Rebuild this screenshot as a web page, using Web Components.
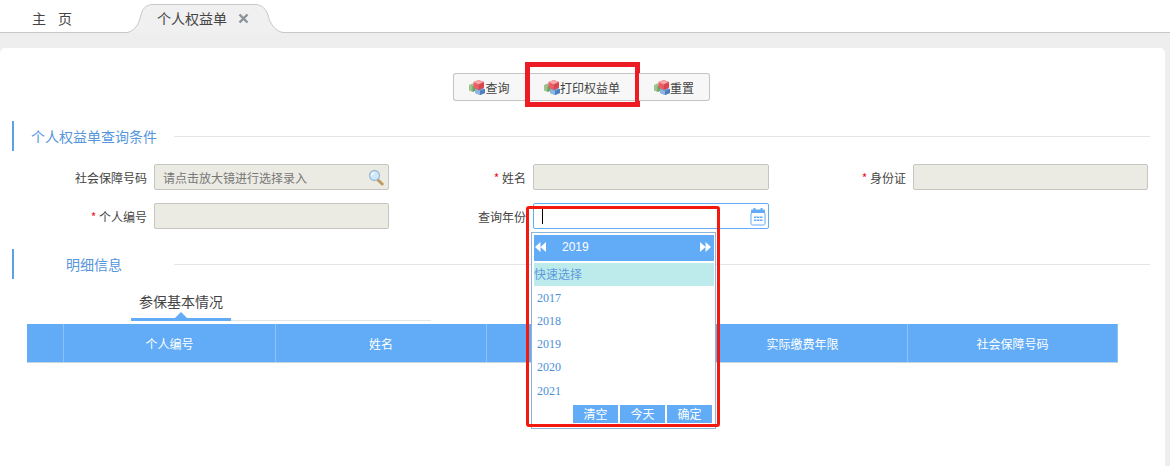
<!DOCTYPE html>
<html lang="zh-CN">
<head>
<meta charset="utf-8">
<title>个人权益单</title>
<style>
    html, body { margin: 0; height: 100%; }
    body {
        background: #eeeeee;
        font-family: "Noto Sans CJK SC", "Liberation Sans", sans-serif;
        font-size: 12px;
        color: #444;
        overflow: hidden;
    }
    #form-grid {
        display: grid;
        grid-template-columns: 389px 380px 379px;
        grid-auto-rows: 26px;
        row-gap: 13px;
        margin-top: 13px;
    }
    #toolbar {
        display: flex;
        margin: 25px 0 20px 453px;
        height: 28px;
    }
</style>
</head>
<body>
<tab-bar></tab-bar>
<content-panel>
    <div id="toolbar">
        <action-button style="width:72px">查询</action-button>
        <action-button style="width:114px" highlight>打印权益单</action-button>
        <action-button style="width:71px">重置</action-button>
    </div>
    <section-title indent="17">个人权益单查询条件</section-title>
    <div id="form-grid">
        <form-field label="社会保障号码"><text-box placeholder="请点击放大镜进行选择录入" search></text-box></form-field>
        <form-field label="姓名" required><text-box style="width:236px"></text-box></form-field>
        <form-field label="身份证" required><text-box></text-box></form-field>
        <form-field label="个人编号" required><text-box></text-box></form-field>
        <form-field label="查询年份"><year-picker></year-picker></form-field>
    </div>
    <section-title indent="52" style="margin-top:20px">明细信息</section-title>
    <detail-tab>参保基本情况</detail-tab>
    <data-table>
        <span></span>
        <span>个人编号</span>
        <span>姓名</span>
        <span></span>
        <span>实际缴费年限</span>
        <span>社会保障号码</span>
    </data-table>
</content-panel>

<script>
const BLUE = '#62acf7';

class TabBar extends HTMLElement {
    constructor() {
        super();
        this.attachShadow({ mode: 'open' });
        this.shadowRoot.innerHTML = `
            <style>
                :host {
                    display: flex;
                    align-items: flex-end;
                    height: 32px;
                    padding-left: 32px;
                    background: #fff;
                    border-bottom: 1px solid #c8c8c8;
                    font-size: 14px;
                    color: #444;
                }
                .home { width: 40px; height: 28px; line-height: 29px; display: flex; justify-content: space-between; }
                .active {
                    position: relative;
                    width: 156px;
                    height: 29px;
                    margin-left: 55px;
                    margin-bottom: -1px;
                    display: flex;
                    align-items: center;
                    box-sizing: border-box;
                    padding: 0 0 1px 30px;
                }
                .shape { position: absolute; left: 0; top: 0; }
                .active span, .close { position: relative; }
                .close { margin-left: 11px; }
            </style>
            <div class="home"><span>主</span><span>页</span></div>
            <div class="active">
                <svg class="shape" width="156" height="29" viewBox="0 0 156 29">
                    <path d="M0 29C8 27 12 20 14 11C15 5 19 1 25 1H129C135 1 139 5 141 11C143 20 148 27 156 29Z" fill="#f0f0f0"/>
                    <path d="M0 28.500C8 27 12 20 14 11C15 5 19 1 25 .5H129C135 1 139 5 141 11C143 20 148 27 156 28.500" fill="none" stroke="#c8c8c8"/>
                </svg>
                <span>个人权益单</span>
                <svg class="close" width="11" height="11" viewBox="0 0 11 11">
                    <path d="M1.500 1.500L9.500 9.500M9.500 1.500L1.500 9.500" stroke="#8a929a" stroke-width="2.400"/>
                </svg>
            </div>
        `;
    }
}

class ContentPanel extends HTMLElement {
    constructor() {
        super();
        this.attachShadow({ mode: 'open' });
        this.shadowRoot.innerHTML = `
            <style>
                :host {
                    display: block;
                    box-sizing: border-box;
                    width: 1165px;
                    height: 418px;
                    margin-top: 15px;
                    background: #fff;
                    border-radius: 5px 5px 0 0;
                    overflow: hidden;
                }
            </style>
            <slot></slot>
        `;
    }
}

class ActionButton extends HTMLElement {
    constructor() {
        super();
        this.attachShadow({ mode: 'open' });
        this.shadowRoot.innerHTML = `
            <style>
                :host {
                    display: flex;
                    position: relative;
                    box-sizing: border-box;
                    align-items: center;
                    justify-content: center;
                    height: 28px;
                    background: #f7f7f7;
                    border: 1px solid #c4c4c4;
                    color: #444;
                    font-size: 12px;
                }
                :host(:first-child) { border-radius: 3px 0 0 3px; border-right: 0; }
                :host(:last-child) { border-radius: 0 3px 3px 0; border-left: 0; }
                :host([highlight])::after {
                    content: "";
                    position: absolute;
                    left: -1px;
                    right: -2px;
                    top: -12px;
                    bottom: -7px;
                    border: 5px solid #ed1c24;
                }
                svg { flex: none; }
            </style>
            <svg width="16" height="16" viewBox="0 0 16 16">
                <path d="M0 6L3.500 4.500L7 6V11.500L3.500 13L0 11.500Z" fill="#9cc48c"/>
                <path d="M3.500 7.500L7 6V11.500L3.500 13Z" fill="#6f9f62"/>
                <path d="M6 10L11 8L16 10V14L11 16L6 14Z" fill="#6f9fd8"/>
                <path d="M6 10L11 12V16L6 14Z" fill="#8db6e4"/>
                <path d="M11 12L16 10V14L11 16Z" fill="#4d80bd"/>
                <path d="M4.500 3L9.700 1L15 3V8.500L9.700 11L4.500 8.500Z" fill="#ea5f66"/>
                <path d="M4.500 3L9.700 1L15 3L9.700 5.400Z" fill="#f6a6a8"/>
                <path d="M9.700 5.400L15 3V8.500L9.700 11Z" fill="#d8474e"/>
            </svg>
            <slot></slot>
        `;
    }
}

class SectionTitle extends HTMLElement {
    constructor() {
        super();
        this.attachShadow({ mode: 'open' });
        const indent = this.getAttribute('indent') || 17;
        this.shadowRoot.innerHTML = `
            <style>
                :host {
                    display: flex;
                    align-items: center;
                    box-sizing: border-box;
                    width: 1138px;
                    height: 30px;
                    margin-left: 12px;
                    border-left: 2px solid #5ba3e6;
                    font-size: 14px;
                    color: #5596dc;
                }
                .title { flex: none; box-sizing: border-box; width: 160px; padding-left: ${indent}px; padding-bottom: 1px; }
                .line { flex: 1; height: 1px; background: #e4e4e4; }
            </style>
            <div class="title"><slot></slot></div>
            <div class="line"></div>
        `;
    }
}

class FormField extends HTMLElement {
    constructor() {
        super();
        this.attachShadow({ mode: 'open' });
        const star = this.hasAttribute('required') ? '<i>*</i> ' : '';
        this.shadowRoot.innerHTML = `
            <style>
                :host {
                    display: flex;
                    justify-content: flex-end;
                    align-items: center;
                    gap: 7px;
                    font-size: 12px;
                    color: #444;
                }
                i { color: #f0141e; font-style: normal; }
            </style>
            <label>${star}${this.getAttribute('label')}</label>
            <slot></slot>
        `;
    }
}

class TextBox extends HTMLElement {
    constructor() {
        super();
        this.attachShadow({ mode: 'open' });
        const search = this.hasAttribute('search') ? `
            <svg width="17" height="17" viewBox="0 0 17 17">
                <path d="M11 11L15.200 15" stroke="#c29a5c" stroke-width="3" stroke-linecap="round"/>
                <circle cx="7.500" cy="6.500" r="5" fill="#cfe8fb" stroke="#9dbcd6" stroke-width="1.300"/>
                <path d="M4.800 6.500C4.900 5 6 3.900 7.500 3.800" fill="none" stroke="#fff" stroke-width="1.300"/>
            </svg>` : '';
        this.shadowRoot.innerHTML = `
            <style>
                :host {
                    display: flex;
                    align-items: center;
                    justify-content: space-between;
                    box-sizing: border-box;
                    width: 235px;
                    height: 26px;
                    padding: 0 4px 0 8px;
                    background: #ebeae3;
                    border: 1px solid #c5c5c2;
                    border-radius: 2px;
                    color: #777;
                    font-size: 12px;
                }
            </style>
            <span>${this.getAttribute('placeholder') || ''}</span>
            ${search}
        `;
    }
}

class YearPicker extends HTMLElement {
    constructor() {
        super();
        this.attachShadow({ mode: 'open' });
        const years = [2017, 2018, 2019, 2020, 2021]
            .map(y => `<div class="year">${y}</div>`).join('');
        this.shadowRoot.innerHTML = `
            <style>
                :host {
                    display: flex;
                    position: relative;
                    align-items: center;
                    justify-content: space-between;
                    box-sizing: border-box;
                    width: 236px;
                    height: 26px;
                    padding: 0 2px 0 8px;
                    background: #fff;
                    border: 1px solid ${BLUE};
                    border-radius: 2px;
                }
                .caret { width: 1px; height: 15px; background: #000; }
                .drop {
                    position: absolute;
                    left: -3px;
                    top: 28px;
                    box-sizing: border-box;
                    width: 185px;
                    height: 197px;
                    padding: 2px 1px 2px 2px;
                    background: #fff;
                    border: 1px solid #8db5dc;
                    z-index: 2;
                    color: #4a8fd8;
                }
                .head {
                    display: flex;
                    align-items: center;
                    height: 26px;
                    margin-bottom: 2px;
                    padding: 0 3px 2px 1px;
                    box-sizing: border-box;
                    background: ${BLUE};
                    color: #fff;
                    font: 12px "Liberation Sans", sans-serif;
                }
                .head b { font-weight: normal; margin-left: 16px; flex: 1; }
                .quick {
                    height: 23px;
                    line-height: 22px;
                    background: #bdeaeb;
                    color: #5a9ade;
                    font-size: 12px;
                    margin-bottom: .6px;
                }
                .year {
                    height: 23.300px;
                    padding-left: 3px;
                    font: 12px/23.300px "Liberation Serif", serif;
                }
                .foot { display: flex; justify-content: flex-end; gap: 2px; margin: 2.400px 2px 0 0; }
                .foot span {
                    width: 45px;
                    height: 18px;
                    line-height: 18px;
                    text-align: center;
                    background: ${BLUE};
                    color: #fff;
                    font-size: 12px;
                }
                .mark {
                    position: absolute;
                    left: -8px;
                    top: 2px;
                    box-sizing: border-box;
                    width: 194px;
                    height: 221px;
                    border: 3px solid #f4190f;
                    border-radius: 3px;
                    z-index: 3;
                    pointer-events: none;
                }
            </style>
            <div class="caret"></div>
            <svg width="16" height="19" viewBox="0 0 16 19">
                <path d="M1 6V3.500Q1 2.500 2 2.500H3.500V1H5.500V2.500H10.500V1H12.500V2.500H14Q15 2.500 15 3.500V6Z" fill="${BLUE}"/>
                <rect x="1" y="5.500" width="14" height="12.500" rx="1.500" fill="none" stroke="${BLUE}"/>
                <path d="M4 9.500H6.500V11H4ZM7 9.500H9.500V11H7ZM10 9.500H12.500V11H10ZM4 12.500H6.500V14H4ZM7 12.500H9.500V14H7ZM10 12.500H12.500V14H10Z" fill="${BLUE}"/>
            </svg>
            <div class="drop">
                <div class="head">
                    <svg width="11" height="10" viewBox="0 0 11 10"><path d="M5.500 0V10L0 5ZM11 0V10L5.500 5Z" fill="#fff"/></svg>
                    <b>2019</b>
                    <svg width="11" height="10" viewBox="0 0 11 10"><path d="M0 0V10L5.500 5ZM5.500 0V10L11 5Z" fill="#fff"/></svg>
                </div>
                <div class="quick">快速选择</div>
                ${years}
                <div class="foot"><span>清空</span><span>今天</span><span>确定</span></div>
            </div>
            <div class="mark"></div>
        `;
    }
}

class DetailTab extends HTMLElement {
    constructor() {
        super();
        this.attachShadow({ mode: 'open' });
        this.shadowRoot.innerHTML = `
            <style>
                :host {
                    display: flex;
                    align-items: flex-end;
                    width: 300px;
                    height: 42px;
                    margin-left: 131px;
                    font-size: 14px;
                    color: #444;
                }
                .tab {
                    position: relative;
                    box-sizing: border-box;
                    width: 100px;
                    height: 38px;
                    padding-top: 8px;
                    text-align: center;
                    border-bottom: 3px solid ${BLUE};
                }
                .tab::after {
                    content: "";
                    position: absolute;
                    left: 44px;
                    bottom: 0;
                    border: 6px solid transparent;
                    border-top: 0;
                    border-bottom-color: ${BLUE};
                }
                .rest { flex: 1; height: 1px; background: #e4e4e4; }
            </style>
            <div class="tab"><slot></slot></div>
            <div class="rest"></div>
        `;
    }
}

class DataTable extends HTMLElement {
    constructor() {
        super();
        this.attachShadow({ mode: 'open' });
        this.shadowRoot.innerHTML = `
            <style>
                :host {
                    display: grid;
                    grid-template-columns: 37px 212px 211px 211px 210px 210px;
                    box-sizing: border-box;
                    width: 1091px;
                    height: 39px;
                    margin: 3px 0 0 27px;
                    background: ${BLUE};
                    border-bottom: 1px solid #c6d3e0;
                    color: #fff;
                    font-size: 12px;
                }
                ::slotted(span) {
                    display: flex;
                    align-items: center;
                    justify-content: center;
                    border-right: 1px solid #8cc2f8;
                }
            </style>
            <slot></slot>
        `;
    }
}

customElements.define('tab-bar', TabBar);
customElements.define('content-panel', ContentPanel);
customElements.define('action-button', ActionButton);
customElements.define('section-title', SectionTitle);
customElements.define('form-field', FormField);
customElements.define('text-box', TextBox);
customElements.define('year-picker', YearPicker);
customElements.define('detail-tab', DetailTab);
customElements.define('data-table', DataTable);
</script>
</body>
</html>
